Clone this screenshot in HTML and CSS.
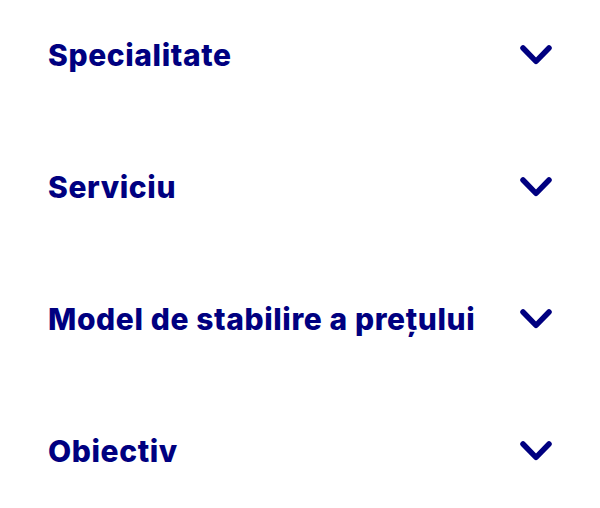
FILE: index.html
```html
<!DOCTYPE html>
<html lang="ro">
<head>
<meta charset="utf-8">
<link rel="stylesheet" href="styles.css">
</head>
<body>
<div class="list">
  <div class="row"><span class="label">Specialitate</span><svg class="chev" viewBox="0 0 32 20" width="32" height="20"><path d="M3 3 L16 16.3 L29 3" fill="none" stroke="#000080" stroke-width="5.5" stroke-linecap="round" stroke-linejoin="round"/></svg></div>
  <div class="row"><span class="label">Serviciu</span><svg class="chev" viewBox="0 0 32 20" width="32" height="20"><path d="M3 3 L16 16.3 L29 3" fill="none" stroke="#000080" stroke-width="5.5" stroke-linecap="round" stroke-linejoin="round"/></svg></div>
  <div class="row"><span class="label">Model de stabilire a prețului</span><svg class="chev" viewBox="0 0 32 20" width="32" height="20"><path d="M3 3 L16 16.3 L29 3" fill="none" stroke="#000080" stroke-width="5.5" stroke-linecap="round" stroke-linejoin="round"/></svg></div>
  <div class="row"><span class="label">Obiectiv</span><svg class="chev" viewBox="0 0 32 20" width="32" height="20"><path d="M3 3 L16 16.3 L29 3" fill="none" stroke="#000080" stroke-width="5.5" stroke-linecap="round" stroke-linejoin="round"/></svg></div>
</div>
</body>
</html>
```

FILE: styles.css
```css
html, body { margin: 0; padding: 0; background: #fff; }
body { font-family: Inter, "Liberation Sans", sans-serif; color: #000080; overflow: hidden; }
.list { padding: 22px 48px 0 48px; display: flex; flex-direction: column; gap: 66px; }
.row { display: flex; align-items: center; justify-content: space-between; height: 66px; }
.label { font-size: 30px; font-weight: 800; letter-spacing: 0.6px; white-space: nowrap; }
.chev { flex: none; display: block; }
```
